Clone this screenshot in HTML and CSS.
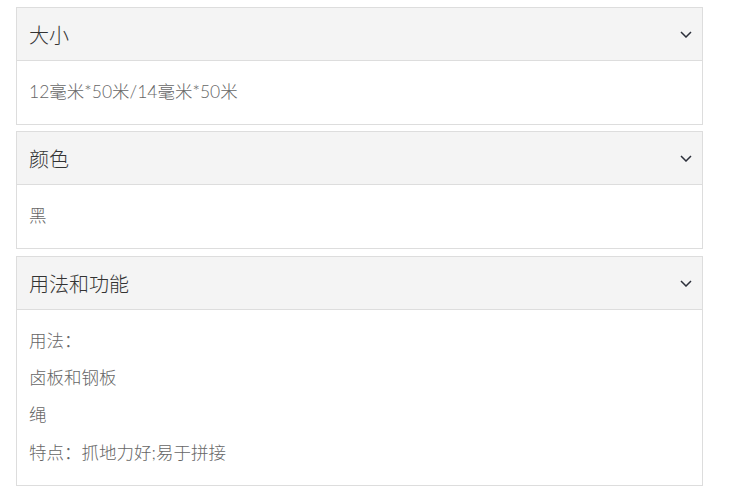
FILE: index.html
```html
<!DOCTYPE html>
<html lang="zh-CN">
<head>
  <meta charset="UTF-8" />
  <title>产品规格</title>
  <link rel="stylesheet" href="styles.css">
</head>
<body>

<div class="specs">
  <div class="panel">
    <div class="panel-head">
      <span>大小</span>
      <svg class="arrow" width="12" height="7" viewBox="0 0 12 7"><path d="M1 1 L6 6 L11 1" fill="none" stroke="#2b2f3a" stroke-width="1.5"/></svg>
    </div>
    <div class="panel-body">
      <p>12毫米*50米/14毫米*50米</p>
    </div>
  </div>

  <div class="panel">
    <div class="panel-head">
      <span>颜色</span>
      <svg class="arrow" width="12" height="7" viewBox="0 0 12 7"><path d="M1 1 L6 6 L11 1" fill="none" stroke="#2b2f3a" stroke-width="1.5"/></svg>
    </div>
    <div class="panel-body">
      <p>黑</p>
    </div>
  </div>

  <div class="panel">
    <div class="panel-head">
      <span>用法和功能</span>
      <svg class="arrow" width="12" height="7" viewBox="0 0 12 7"><path d="M1 1 L6 6 L11 1" fill="none" stroke="#2b2f3a" stroke-width="1.5"/></svg>
    </div>
    <div class="panel-body">
      <p>用法：</p>
      <p>卤板和钢板</p>
      <p>绳</p>
      <p>特点：抓地力好;易于拼接</p>
    </div>
  </div>
</div>

</body>
</html>
```

FILE: styles.css
```css
body {
  margin: 0;
  background: #fff;
  font-family: "Lato", "Noto Sans CJK SC", sans-serif;
}

.specs {
  width: 687px;
  padding: 7px 0 0 16px;
  display: flex;
  flex-direction: column;
  gap: 6px;
}

.panel {
  border: 1px solid #dddddd;
}

.panel:last-child {
  margin-top: 1px;
}

.panel-head {
  height: 52px;
  background: #f4f4f4;
  border-bottom: 1px solid #dddddd;
  display: flex;
  align-items: center;
  justify-content: space-between;
  padding: 0 10px 0 12px;
  font-size: 20px;
  font-weight: 300;
  color: #333;
}

.arrow {
  margin-top: 1px;
}

.panel-body {
  padding: 18px 12px 20px;
  font-size: 17.5px;
  font-weight: 300;
  color: #666;
}

.panel-body p {
  margin: 0 0 12.2px;
  line-height: 25px;
}

.panel-body p:last-child {
  margin-bottom: 0;
}
```
